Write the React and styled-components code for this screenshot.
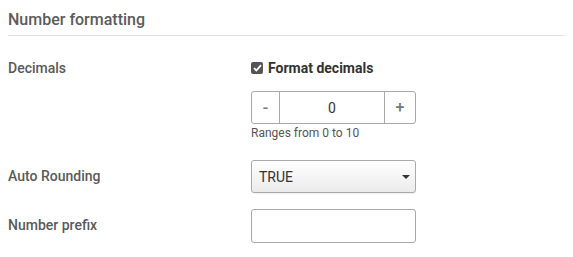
import styled, { createGlobalStyle } from "styled-components";

const GlobalStyle = createGlobalStyle`
  body {
    margin: 0;
    background: #fff;
    font-family: Roboto, "Liberation Sans", sans-serif;
  }
`;

const Panel = styled.div`
  padding: 0 8px;
  width: 557px;
`;

const Title = styled.h3`
  margin: 0 0 22px;
  padding: 10px 0 5px;
  font-size: 16px;
  line-height: 20px;
  font-weight: 500;
  color: #5b5b5b;
  border-bottom: 1px solid #e3e3e3;
`;

const Row = styled.div`
  display: grid;
  grid-template-columns: 243px 165px;
  align-items: start;
  margin-bottom: ${(p) => p.$gap || 16}px;
`;

const Label = styled.div`
  font-size: 14px;
  font-weight: 500;
  color: #5a5a5a;
  line-height: ${(p) => p.$line || 33}px;
`;

const Column = styled.div`
  display: flex;
  flex-direction: column;
`;

const CheckLine = styled.label`
  display: flex;
  align-items: center;
  gap: 5px;
  height: 20px;
  margin-bottom: 13px;
  font-size: 14px;
  font-weight: 700;
  color: #333;
`;

const Box = styled.span`
  width: 12px;
  height: 12px;
  border-radius: 2px;
  background: #555;
  display: flex;
  align-items: center;
  justify-content: center;
`;

const Stepper = styled.div`
  display: flex;
  height: 33px;
  box-sizing: border-box;
  border: 1px solid #a9a9a9;
  border-radius: 3px;
  overflow: hidden;
`;

const StepButton = styled.div`
  width: ${(p) => p.$w}px;
  display: flex;
  align-items: center;
  justify-content: center;
  font-size: 16px;
  font-weight: 500;
  color: #777;
`;

const StepValue = styled.div`
  flex: 1;
  display: flex;
  align-items: center;
  justify-content: center;
  border-left: 1px solid #a9a9a9;
  border-right: 1px solid #a9a9a9;
  font-size: 14px;
  color: #333;
`;

const Hint = styled.div`
  margin-top: 1px;
  padding-bottom: 3px;
  font-size: 12px;
  line-height: 16px;
  color: #555;
`;

const Select = styled.div`
  height: 33px;
  box-sizing: border-box;
  display: flex;
  align-items: center;
  justify-content: space-between;
  padding: 0 5px 0 7px;
  border: 1px solid #a9a9a9;
  border-radius: 3px;
  background: linear-gradient(#ffffff, #ebebeb);
  box-shadow: 0 1px 1px rgba(0, 0, 0, 0.06);
  font-size: 14px;
  color: #333;
`;

const Caret = styled.span`
  width: 0;
  height: 0;
  border-left: 4px solid transparent;
  border-right: 4px solid transparent;
  border-top: 4px solid #333;
`;

const TextInput = styled.div`
  height: 34px;
  box-sizing: border-box;
  border: 1px solid #a9a9a9;
  border-radius: 3px;
  background: #fff;
`;

export default function App() {
  return (
    <Panel>
      <GlobalStyle />
      <Title>Number formatting</Title>

      <Row $gap={16}>
        <Label $line={20}>Decimals</Label>
        <Column>
          <CheckLine>
            <Box>
              <svg width="9" height="8" viewBox="0 0 9 8">
                <path d="M1 4.2 L3.4 6.5 L8 1.2" stroke="#fff" strokeWidth="1.8" fill="none" />
              </svg>
            </Box>
            Format decimals
          </CheckLine>
          <Stepper>
            <StepButton $w={27}>-</StepButton>
            <StepValue>0</StepValue>
            <StepButton $w={30}>+</StepButton>
          </Stepper>
          <Hint>Ranges from 0 to 10</Hint>
        </Column>
      </Row>

      <Row $gap={16}>
        <Label>Auto Rounding</Label>
        <Select>
          TRUE
          <Caret />
        </Select>
      </Row>

      <Row>
        <Label>Number prefix</Label>
        <TextInput />
      </Row>
    </Panel>
  );
}
